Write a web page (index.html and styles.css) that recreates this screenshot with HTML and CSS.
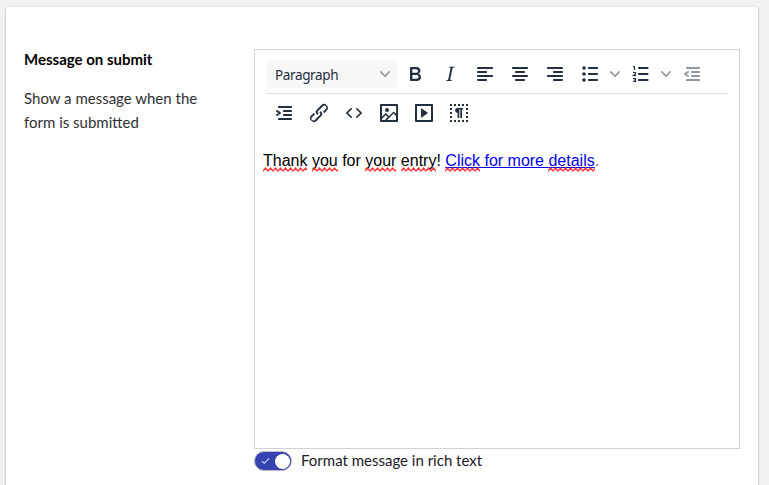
FILE: index.html
```html
<!DOCTYPE html>
<html lang="en">
<head>
<meta charset="utf-8">
<title>Message on submit</title>
<link rel="stylesheet" href="styles.css">
</head>
<body>
<main class="card">
  <section class="intro">
    <h2>Message on submit</h2>
    <p>Show a message when the form is submitted</p>
  </section>
  <section class="field">
    <div class="editor">
      <div class="toolbar">
        <div class="row row-first">
          <button class="select"><span>Paragraph</span><svg class="chev" viewBox="0 0 10 10"><path d="M8.7 2.2c.3-.3.8-.3 1 0 .4.4.4.9 0 1.2L5.7 7.8c-.3.3-.9.3-1.2 0L.2 3.4a.8.8 0 0 1 0-1.2c.3-.3.8-.3 1.1 0L5 6l3.7-3.8Z"/></svg></button>
          <button class="tool" aria-label="Bold"><svg viewBox="0 0 24 24"><path fill-rule="evenodd" d="M7.8 19c-.3 0-.5 0-.6-.2l-.2-.5V5.7c0-.2 0-.4.2-.5l.6-.2h5c1.5 0 2.7.3 3.5 1 .7.6 1.1 1.4 1.1 2.5a3 3 0 0 1-.6 1.9c-.4.6-1 1-1.6 1.2.4.1.9.3 1.3.6s.8.7 1 1.2c.4.4.5 1 .5 1.6 0 1.3-.4 2.3-1.3 3-.8.7-2.1 1-3.8 1H7.8Zm5-8.3c.6 0 1.2-.1 1.6-.5.4-.3.6-.7.6-1.3 0-1.1-.8-1.7-2.3-1.7H9.3v3.5h3.4Zm.5 6c.7 0 1.3-.1 1.7-.4.4-.4.6-.9.6-1.5s-.2-1-.7-1.4c-.4-.3-1-.4-2-.4H9.4v3.8h4Z"/></svg></button>
          <button class="tool" aria-label="Italic"><svg viewBox="0 0 24 24"><path d="m16.7 4.7-.1.9h-.3c-.6 0-1 0-1.4.3-.3.3-.4.6-.5 1.1l-2.1 9.8v.6c0 .5.4.8 1.4.8h.2l-.2.8H8l.2-.8h.2c1.1 0 1.8-.5 2-1.5l2-9.8.1-.5c0-.6-.4-.8-1.4-.8h-.3l.2-.9h5.8Z"/></svg></button>
          <button class="tool" aria-label="Align left"><svg viewBox="0 0 24 24"><rect x="4" y="5" width="16" height="2" rx=".7"/><rect x="4" y="9" width="10" height="2" rx=".7"/><rect x="4" y="13" width="16" height="2" rx=".7"/><rect x="4" y="17" width="10" height="2" rx=".7"/></svg></button>
          <button class="tool" aria-label="Align center"><svg viewBox="0 0 24 24"><rect x="4" y="5" width="16" height="2" rx=".7"/><rect x="7" y="9" width="10" height="2" rx=".7"/><rect x="4" y="13" width="16" height="2" rx=".7"/><rect x="7" y="17" width="10" height="2" rx=".7"/></svg></button>
          <button class="tool" aria-label="Align right"><svg viewBox="0 0 24 24"><rect x="4" y="5" width="16" height="2" rx=".7"/><rect x="10" y="9" width="10" height="2" rx=".7"/><rect x="4" y="13" width="16" height="2" rx=".7"/><rect x="10" y="17" width="10" height="2" rx=".7"/></svg></button>
          <button class="tool split" aria-label="Bullet list"><svg viewBox="0 0 24 24"><rect x="10" y="5" width="10" height="2" rx=".7"/><rect x="10" y="11" width="10" height="2" rx=".7"/><rect x="10" y="17" width="10" height="2" rx=".7"/><circle cx="6" cy="6" r="1.8"/><circle cx="6" cy="12" r="1.8"/><circle cx="6" cy="18" r="1.8"/></svg><svg class="chev" viewBox="0 0 10 10"><path d="M8.7 2.2c.3-.3.8-.3 1 0 .4.4.4.9 0 1.2L5.7 7.8c-.3.3-.9.3-1.2 0L.2 3.4a.8.8 0 0 1 0-1.2c.3-.3.8-.3 1.1 0L5 6l3.7-3.8Z"/></svg></button>
          <button class="tool split" aria-label="Numbered list"><svg viewBox="0 0 24 24"><rect x="9" y="5" width="10.500" height="2" rx=".7"/><rect x="9" y="11" width="10.500" height="2" rx=".7"/><rect x="9" y="17" width="10.500" height="2" rx=".7"/><path class="digits" d="M4 4.600h1.500V8M4 10.500h2.500v1.400L4.500 13.500H7M4 16.500h2.500v3H4M4.500 18h2"/></svg><svg class="chev" viewBox="0 0 10 10"><path d="M8.7 2.2c.3-.3.8-.3 1 0 .4.4.4.9 0 1.2L5.7 7.8c-.3.3-.9.3-1.2 0L.2 3.4a.8.8 0 0 1 0-1.2c.3-.3.8-.3 1.1 0L5 6l3.7-3.8Z"/></svg></button>
          <button class="tool muted" aria-label="Outdent"><svg viewBox="0 0 24 24"><rect x="6" y="5" width="14" height="2" rx=".7"/><rect x="11" y="9" width="9" height="2" rx=".7"/><rect x="11" y="13" width="9" height="2" rx=".7"/><rect x="6" y="17" width="14" height="2" rx=".7"/><path class="arrow" d="m8 10-3 2 3 2"/></svg></button>
        </div>
        <div class="row row-second">
          <button class="tool" aria-label="Indent"><svg viewBox="0 0 24 24"><rect x="6" y="5" width="14" height="2" rx=".7"/><rect x="11" y="9" width="9" height="2" rx=".7"/><rect x="11" y="13" width="9" height="2" rx=".7"/><rect x="6" y="17" width="14" height="2" rx=".7"/><path class="arrow" d="m5 10 3 2-3 2"/></svg></button>
          <button class="tool" aria-label="Link"><svg viewBox="0 0 24 24"><path d="M6.2 12.3a1 1 0 0 1 1.4 1.4l-2 2a2 2 0 1 0 2.6 2.8l4.8-4.8a1 1 0 0 0 0-1.4 1 1 0 1 1 1.4-1.3 2.9 2.9 0 0 1 0 4L9.6 20a3.9 3.9 0 0 1-5.5-5.5l2-2Zm11.6-.6a1 1 0 0 1-1.4-1.4l2-2a2 2 0 1 0-2.6-2.8L11 10.3a1 1 0 0 0 0 1.4A1 1 0 1 1 9.6 13a2.9 2.9 0 0 1 0-4L14.4 4a3.9 3.9 0 0 1 5.5 5.500l-2 2Z"/></svg></button>
          <button class="tool" aria-label="Source code"><svg viewBox="0 0 24 24"><path d="M9.8 15.7c.3.3.3.8 0 1-.3.4-.9.4-1.2 0l-4.400-4.100a.8.8 0 0 1 0-1.200l4.400-4.200c.3-.3.9-.3 1.200 0 .3.3.3.8 0 1.100L6 12l3.800 3.700ZM14.2 15.7c-.3.3-.3.8 0 1 .4.4.9.4 1.200 0l4.400-4.100c.3-.3.3-.9 0-1.200l-4.400-4.200a.8.8 0 0 0-1.200 0c-.3.3-.3.8 0 1.100L18 12l-3.800 3.700Z"/></svg></button>
          <button class="tool" aria-label="Image"><svg viewBox="0 0 24 24"><path fill-rule="evenodd" d="m5 15.700 3.300-3.200c.3-.3.7-.3 1 0L12 15l4.100-4c.3-.4.8-.4 1 0l2 1.900V5H5v10.700ZM5 18V19h3l2.800-2.900-2-2L5 17.900Zm14-3-2.500-2.400-6.400 6.500H19v-4ZM4 3h16c.6 0 1 .4 1 1v16c0 .6-.4 1-1 1H4a1 1 0 0 1-1-1V4c0-.6.4-1 1-1Zm6 8a2 2 0 1 0 0-4 2 2 0 0 0 0 4Z"/></svg></button>
          <button class="tool" aria-label="Media"><svg viewBox="0 0 24 24"><path fill-rule="evenodd" d="M4 3h16c.6 0 1 .4 1 1v16c0 .6-.4 1-1 1H4a1 1 0 0 1-1-1V4c0-.6.4-1 1-1Zm1 2v14h14V5H5Zm4.800 2.600 5.600 4a.5.5 0 0 1 0 .8l-5.600 4A.5.5 0 0 1 9 16V8a.5.5 0 0 1 .8-.4Z"/></svg></button>
          <button class="tool" aria-label="Show blocks"><svg viewBox="0 0 24 24"><path class="dots" d="M3 4h18M3 20h18"/><path class="dots" d="M4 7v12M20 7v12"/><path d="M10.500 7H16v1.200h-1V17h-1.700V8.200h-1V17h-1.700v-5a2.500 2.500 0 0 1-.1-5Z"/></svg></button>
        </div>
      </div>
      <div class="content"><span class="misspelt">Thank</span> <span class="misspelt">you</span> for <span class="misspelt">your</span> <span class="misspelt">entry</span>! <a href="#"><span class="misspelt">Click</span> for more <span class="misspelt">details</span></a><span class="stop">.</span></div>
    </div>
    <label class="toggle-line"><span class="toggle"><svg viewBox="0 0 10 8"><path d="m1 4 2.500 2.600L9 1"/></svg><span class="knob"></span></span><span>Format message in rich text</span></label>
  </section>
</main>
</body>
</html>
```

FILE: styles.css
```css
* { box-sizing: border-box; }
body {
  margin: 0;
  height: 485px;
  overflow: hidden;
  padding: 7px 11px 0 6px;
  background: #f2f2f4;
  font-family: Lato, sans-serif;
  font-size: 15px;
  color: #1b1b1f;
}
.card {
  display: grid;
  grid-template-columns: 230px 486px;
  height: 500px;
  padding: 42px 18px 0;
  background: #fff;
  border-radius: 3px;
  box-shadow: 0 1px 2px 1px rgba(0, 0, 0, .15);
}
h2 { margin: 0; font-size: 15px; line-height: 20px; font-weight: 700; color: #000; }
.intro p { margin: 17px 0 0; width: 190px; line-height: 24px; color: #303033; }
.editor { height: 400px; border: 1px solid #d2d2d4; }
.toolbar { padding: 4px 11px 0; }
.row { display: flex; align-items: center; height: 39px; }
.row-first { border-bottom: 1px solid #ddd; height: 40px; }
.row-second { padding: 0 0 2px 1px; }
button { border: 0; padding: 0; background: none; font: inherit; color: #222f3e; }
svg { display: block; fill: currentColor; }
.select {
  display: flex;
  align-items: center;
  justify-content: space-between;
  width: 130px;
  height: 28px;
  margin: 0 1px;
  padding: 0 7px 0 8px;
  background: #f7f7f7;
  border-radius: 3px;
  font-family: "Noto Sans", sans-serif;
  font-size: 13.5px;
  letter-spacing: -.36px;
}
.select span { padding-top: 2px; }
.chev { width: 10px; height: 10px; color: #90979f; }
.tool { display: flex; align-items: center; justify-content: center; width: 34px; height: 28px; margin-right: 1px; }
.tool svg { flex: none; width: 24px; height: 24px; }
.tool .chev { width: 10px; height: 10px; margin-left: 8px; }
.split { width: 50px; padding-left: 1px; }
.muted { color: #90979f; }
.arrow { fill: none; stroke: currentColor; stroke-width: 2; stroke-linecap: round; stroke-linejoin: round; }
.digits { fill: none; stroke: currentColor; stroke-width: 1.2; }
.dots { fill: none; stroke: currentColor; stroke-width: 2; stroke-dasharray: 2; }
.content { padding: 17px 8px; font: 16px/22px "Liberation Sans", sans-serif; color: #000; }
.content a {
  color: #00e;
  text-decoration: underline 1px;
  text-decoration-skip-ink: none;
  text-underline-offset: 1px;
}
.stop { color: #667; }
.misspelt { position: relative; }
.misspelt::after {
  content: "";
  position: absolute;
  left: 0;
  right: 0;
  top: 15px;
  height: 5px;
  background: url("data:image/svg+xml,%3Csvg xmlns='http://www.w3.org/2000/svg' width='5' height='5'%3E%3Cpath d='M-2.5 1L0 4L2.5 1L5 4L7.5 1' fill='none' stroke='%23f33' stroke-width='1.2'/%3E%3C/svg%3E") repeat-x;
}
.toggle-line { display: flex; align-items: center; gap: 9px; height: 22px; }
.toggle {
  display: flex;
  align-items: center;
  justify-content: space-between;
  width: 38px;
  height: 20px;
  margin-top: 2px;
  padding: 0 1px 0 6px;
  border: 1px solid #b9b9bf;
  border-radius: 10px;
  background: #3544b1;
}
.toggle svg { width: 9px; height: 8px; fill: none; stroke: #dfe3ff; stroke-width: 1.2; }
.knob { width: 15px; height: 15px; border-radius: 50%; background: #fff; }
```
